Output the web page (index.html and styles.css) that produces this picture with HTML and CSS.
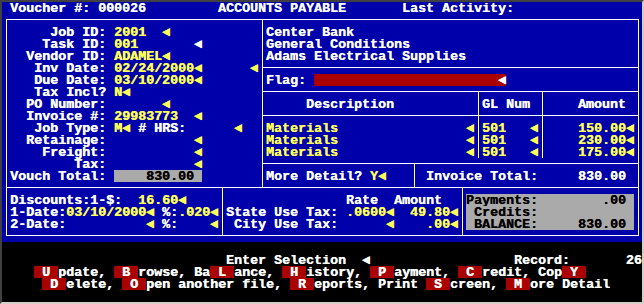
FILE: index.html
```html
<!DOCTYPE html>
<html lang="en">
<head>
  <meta charset="UTF-8">
  <title>Accounts Payable</title>
  <link rel="stylesheet" href="styles.css">
</head>
<body>
  <div class="screen">
    <div class="panel"></div>

    <!-- box frames, drawn through the middle of the character cells -->
    <div class="box box-form"></div>
    <div class="box box-vendor"></div>
    <div class="box box-flag"></div>
    <div class="box box-lines"></div>
    <div class="rule-head"></div>
    <div class="sep sep-gl"></div>
    <div class="sep sep-amt"></div>
    <div class="box box-more"></div>
    <div class="box box-total"></div>
    <div class="box box-disc"></div>
    <div class="box box-tax"></div>
    <div class="box box-pay"></div>

<pre class="text">
 Voucher #: 000026         ACCOUNTS PAYABLE       Last Activity:

      Job ID: <span class="y">2001  ◄</span>            Center Bank
     Task ID: <span class="y">001</span>       ◄        General Conditions
   Vendor ID: <span class="y">ADAMEL◄</span>            Adams Electrical Supplies
    Inv Date: <span class="y">02/24/2000◄      ◄</span>
    Due Date: <span class="y">03/10/2000◄</span>        Flag: <span class="flag">                       ◄</span>
    Tax Incl? <span class="y">N◄</span>
   PO Number:       <span class="y">◄</span>                 Description           GL Num      Amount
   Invoice #: <span class="y">29983773  ◄</span>
    Job Type: <span class="y">M◄</span> # HRS:      <span class="y">◄</span>   <span class="y">Materials                ◄ 501   ◄     150.00◄</span>
   Retainage:           <span class="y">◄</span>        <span class="y">Materials                ◄ 501   ◄     230.00◄</span>
     Freight:           <span class="y">◄</span>        <span class="y">Materials                ◄ 501   ◄     175.00◄</span>
         Tax:           <span class="y">◄</span>
 Vouch Total: <span class="fill">    830.00 </span>        More Detail? <span class="y">Y◄</span>     Invoice Total:     830.00

 Discounts:1-$:  <span class="y">16.60◄</span>                    Rate  Amount   <span class="fill">Payments:        .00 </span>
 1-Date:<span class="y">03/10/2000◄</span> %:<span class="y">.020◄</span> State Use Tax: <span class="y">.0600◄  49.80◄</span> <span class="fill"> Credits:            </span>
 2-Date:          <span class="y">◄</span> %:    <span class="y">◄</span>  City Use Tax:      <span class="y">◄    .00◄</span> <span class="fill"> BALANCE:     830.00 </span>


                            Enter Selection  ◄                  Record:       26
    <span class="key"> U </span>pdate, <span class="key"> B </span>rowse, Ba<span class="key"> L </span>ance, <span class="key"> H </span>istory, <span class="key"> P </span>ayment, <span class="key"> C </span>redit, Cop<span class="key"> Y </span>
     <span class="key"> D </span>elete, <span class="key"> O </span>pen another file, <span class="key"> R </span>eports, Print <span class="key"> S </span>creen, <span class="key"> M </span>ore Detail
</pre>
  </div>
</body>
</html>
```

FILE: styles.css
```css
body { margin: 0; background: #000; }

/* 80 x 25 text screen, 8x12 cells */
.screen {
  display: grid;
  grid-template-columns: repeat(80, 8px);
  grid-template-rows: repeat(25, 12px);
  width: 640px;
  height: 300px;
  border: 2px solid;
  border-color: #404040 #d4d0c8 #d4d0c8 #404040;
  background: #000;
  overflow: hidden;
}
.panel { grid-column: 1 / -1; grid-row: 1 / 21; background: #0000aa; }

.box { margin: 5px 3px 6px 4px; border: 1px solid #fff; }
.box-form   { grid-column: 1 / 34;  grid-row: 2 / 17; }
.box-vendor { grid-column: 33 / 81; grid-row: 2 / 7; }
.box-flag   { grid-column: 33 / 81; grid-row: 6 / 9; }
.box-lines  { grid-column: 33 / 81; grid-row: 8 / 15; }
.box-more   { grid-column: 33 / 53; grid-row: 14 / 17; }
.box-total  { grid-column: 52 / 81; grid-row: 14 / 17; }
.box-disc   { grid-column: 1 / 29;  grid-row: 16 / 21; }
.box-tax    { grid-column: 28 / 59; grid-row: 16 / 21; }
.box-pay    { grid-column: 58 / 81; grid-row: 16 / 21; }

.rule-head { grid-column: 33 / 81; grid-row: 10; margin: 5px 3px 0 4px; border-top: 1px solid #fff; }
.sep { grid-row: 8 / 14; margin: 5px 0 0 4px; border-left: 1px solid #fff; }
.sep-gl  { grid-column: 60; }
.sep-amt { grid-column: 68; }

/* glyphs sit 1px lower in the cell than the font puts them */
.text {
  grid-column: 1 / -1;
  grid-row: 1 / -1;
  margin: 0;
  padding-top: 1px;
  font: bold 13.333px/12px "Liberation Mono", monospace;
  color: #fff;
  text-shadow: 0.4px 0 currentColor;
  white-space: pre;
}
.y { color: #ffff55; }
.fill, .flag, .key {
  display: inline-block;
  vertical-align: top;
  height: 11px;
  margin-top: -1px;
  padding-top: 1px;
}
.fill { background: #aaa; color: #000; }
.flag { background: #aa0000; color: #fff; }
.key  { background: #aa0000; color: #fff; }
```
